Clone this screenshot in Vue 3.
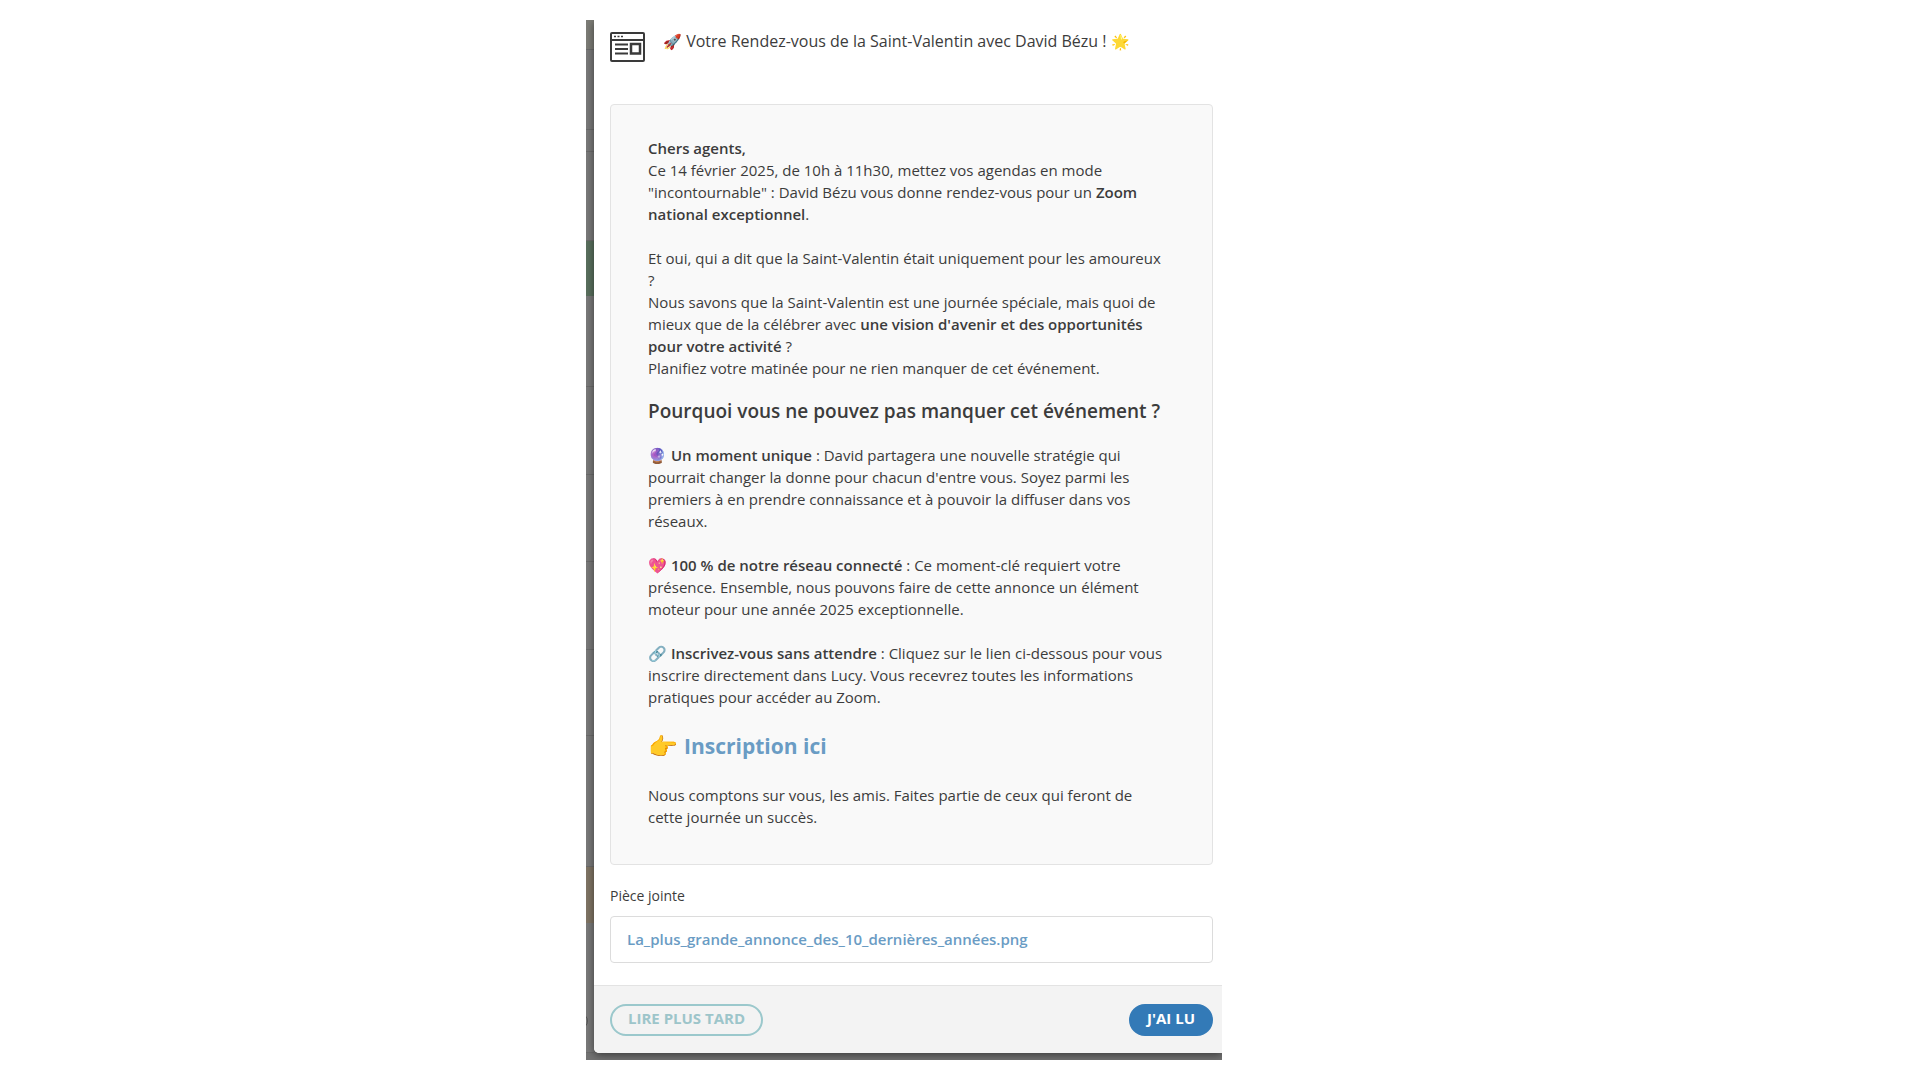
<template>
  <main class="page">
    <div class="backdrop">
      <div class="behind" aria-hidden="true">
        <div
          v-for="(row, i) in rows"
          :key="i"
          class="behind-row"
          :class="row.kind"
          :style="{ flexGrow: row.size }"
        ></div>
      </div>

      <section class="modal" role="dialog" aria-labelledby="modal-title">
        <header class="modal-header">
          <svg class="news-icon" viewBox="0 0 35 30" fill="none" stroke="#3a3a3a">
            <rect x="1" y="1" width="33" height="28" rx="1" stroke-width="2" />
            <path d="M1 8h33" stroke-width="2" />
            <path d="M4 4.5h2M7.5 4.5h2M11 4.5h2" stroke-width="1.5" />
            <path d="M5 12.5h13M5 17h13M5 21.5h13" stroke-width="2" />
            <rect x="21" y="12" width="9" height="9.5" stroke-width="2.5" />
          </svg>
          <h1 id="modal-title" class="title">
            <span class="emoji">🚀</span> Votre Rendez-vous de la Saint-Valentin avec David Bézu !
            <span class="emoji">🌟</span>
          </h1>
        </header>

        <div class="modal-body">
          <article class="message">
            <p>
              <strong>Chers agents,</strong><br />
              Ce 14 février 2025, de 10h à 11h30, mettez vos agendas en mode<br />
              "incontournable" : David Bézu vous donne rendez-vous pour un <strong>Zoom<br />
              national exceptionnel</strong>.
            </p>
            <p>
              Et oui, qui a dit que la Saint-Valentin était uniquement pour les amoureux<br />
              ?<br />
              Nous savons que la Saint-Valentin est une journée spéciale, mais quoi de<br />
              mieux que de la célébrer avec <strong>une vision d'avenir et des opportunités<br />
              pour votre activité</strong> ?<br />
              Planifiez votre matinée pour ne rien manquer de cet événement.
            </p>
            <h2>Pourquoi vous ne pouvez pas manquer cet événement ?</h2>
            <p>
              🔮 <strong>Un moment unique</strong> : David partagera une nouvelle stratégie qui<br />
              pourrait changer la donne pour chacun d'entre vous. Soyez parmi les<br />
              premiers à en prendre connaissance et à pouvoir la diffuser dans vos<br />
              réseaux.
            </p>
            <p>
              💖 <strong>100 % de notre réseau connecté</strong> : Ce moment-clé requiert votre<br />
              présence. Ensemble, nous pouvons faire de cette annonce un élément<br />
              moteur pour une année 2025 exceptionnelle.
            </p>
            <p>
              🔗 <strong>Inscrivez-vous sans attendre</strong> : Cliquez sur le lien ci-dessous pour vous<br />
              inscrire directement dans Lucy. Vous recevrez toutes les informations<br />
              pratiques pour accéder au Zoom.
            </p>
            <p class="signup">
              <span class="hand">👉</span>
              <a href="#inscription">Inscription ici</a>
            </p>
            <p>
              Nous comptons sur vous, les amis. Faites partie de ceux qui feront de<br />
              cette journée un succès.
            </p>
          </article>

          <h3 id="attachment" class="attachment-label">Pièce jointe</h3>
          <div class="attachment" role="group" aria-labelledby="attachment">
            <a href="#piece-jointe">{{ fileName }}</a>
          </div>
        </div>

        <footer class="modal-footer">
          <button type="button" class="btn btn-later">LIRE PLUS TARD</button>
          <button type="button" class="btn btn-read">J'AI LU</button>
        </footer>
      </section>
    </div>
  </main>
</template>

<script setup>
const fileName = 'La_plus_grande_annonce_des_10_dernières_années.png';

// sliver of the dimmed page visible left of the modal
const rows = [
  { size: 30, kind: 'warm' },
  { size: 80, kind: 'plain' },
  { size: 22, kind: 'plain' },
  { size: 89, kind: 'plain' },
  { size: 55, kind: 'green' },
  { size: 91, kind: 'plain' },
  { size: 88, kind: 'plain' },
  { size: 87, kind: 'plain' },
  { size: 88, kind: 'plain' },
  { size: 86, kind: 'plain' },
  { size: 131, kind: 'plain' },
  { size: 56, kind: 'brown' },
  { size: 130, kind: 'plain with-dot' }
];
</script>

<style>
body {
  margin: 0;
  background: #fff;
}
</style>

<style scoped>
.page {
  display: grid;
  grid-template-columns: 586fr minmax(636px, 636fr) 698fr;
  padding: 20px 0;
  font-family: 'Open Sans', 'Noto Sans', sans-serif;
  font-size: 15px;
  line-height: 22px;
  color: #3c3c3c;
}

.backdrop {
  grid-column: 2;
  display: flex;
  padding-bottom: 7px;
  background: #737373;
  overflow: hidden;
}

.behind {
  display: flex;
  flex-direction: column;
  width: 8px;
}

.behind-row {
  flex-basis: 0;
  min-height: 0;
}

.plain {
  background: #7a7a7a;
  box-shadow: inset 0 -1px 0 #6c6c6c;
}

.warm {
  background: #7d7d77;
  box-shadow: inset 0 -1px 0 #6c6c6c;
}

.green {
  background: #5a705e;
}

.brown {
  background: #807565;
}

.with-dot {
  position: relative;
}

/* edge of a round control in the page behind */
.with-dot::after {
  content: '';
  position: absolute;
  left: -14px;
  bottom: 24px;
  width: 14px;
  height: 14px;
  border: 1px solid #555;
  border-radius: 50%;
}

.modal {
  position: relative;
  flex: 1;
  background: #fff;
  border-radius: 0 0 0 5px;
  box-shadow: 0 2px 8px rgba(0, 0, 0, 0.5);
}

.modal-header {
  display: flex;
  align-items: flex-start;
  gap: 18px;
  padding: 10px 9px 0 16px;
  min-height: 74px;
}

.news-icon {
  width: 35px;
  height: 30px;
  margin-top: 2px;
}

.title {
  margin: 0;
  font-size: 16px;
  font-weight: 400;
  line-height: 22px;
  white-space: nowrap;
}

.emoji {
  font-size: 15px;
}

.modal-body {
  padding: 0 9px 22px 16px;
}

.message {
  display: flex;
  flex-direction: column;
  gap: 22px;
  padding: 32px 0 36px 37px;
  background: #f9f9f9;
  border: 1px solid #e3e3e3;
  border-radius: 4px;
  white-space: nowrap;
}

.message p {
  margin: 0;
}

.message strong {
  font-weight: 600;
}

.message h2 {
  margin: 0;
  font-size: 19px;
  font-weight: 600;
  line-height: 21px;
}

.message .signup {
  display: flex;
  align-items: center;
  gap: 6px;
  font-size: 21px;
  font-weight: 700;
  line-height: 32px;
}

.hand {
  font-size: 24px;
}

a {
  color: #6a9cc4;
  text-decoration: none;
}

.attachment-label {
  margin: 20px 0 9px;
  font-size: 14px;
  font-weight: 400;
  line-height: 22px;
}

.attachment {
  padding: 11px 16px 12px;
  border: 1px solid #dcdcdc;
  border-radius: 4px;
  font-weight: 600;
}

.modal-footer {
  display: flex;
  justify-content: space-between;
  padding: 18px 9px 17px 16px;
  background: #f3f3f3;
  border-top: 1px solid #e3e3e3;
  border-radius: 0 0 0 5px;
}

.btn {
  height: 32px;
  padding: 0 16px 4px;
  border-radius: 16px;
  font-family: inherit;
  font-size: 15px;
  font-weight: 700;
  line-height: 22px;
  cursor: pointer;
}

.btn-later {
  color: #9dc5ca;
  background: transparent;
  border: 2px solid #9bc8cc;
}

.btn-read {
  color: #fff;
  background: #337ab7;
  border: 2px solid #337ab7;
}
</style>
